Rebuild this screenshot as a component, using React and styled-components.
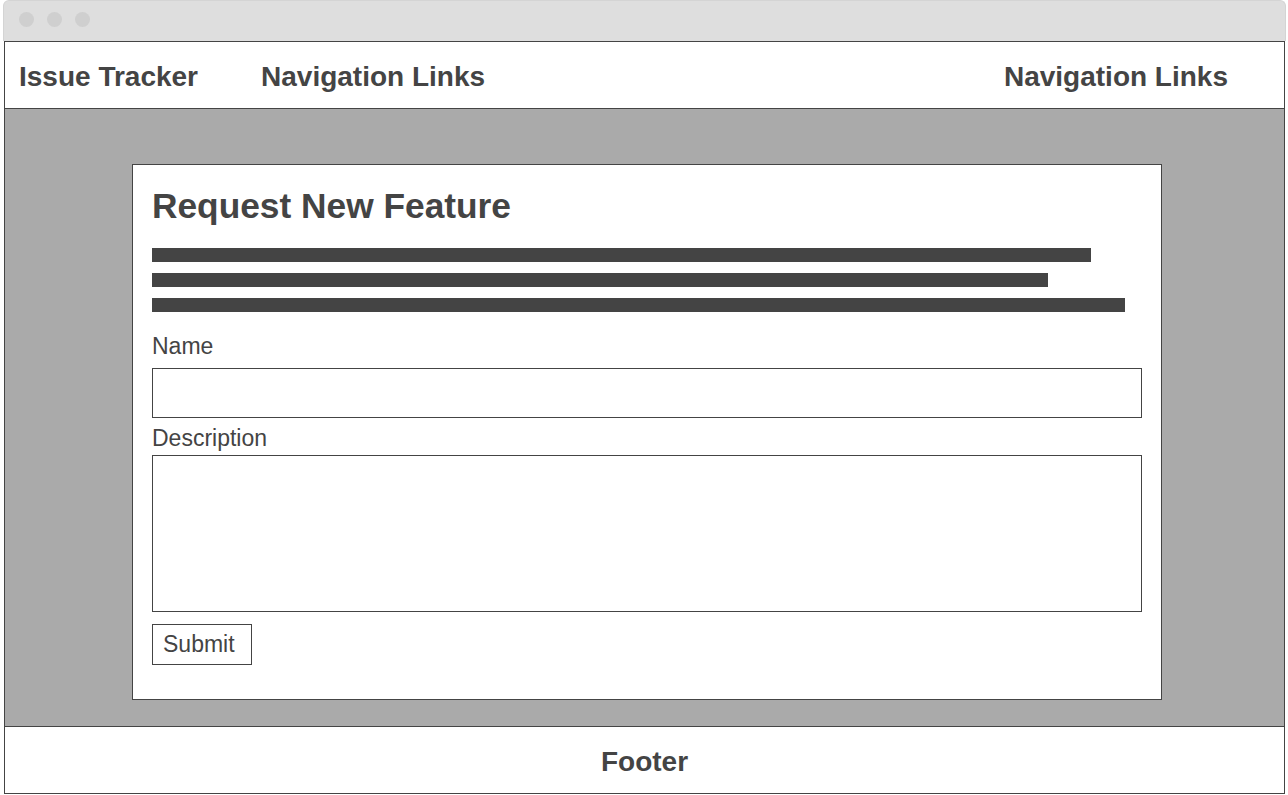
import React from 'react';
import styled, { createGlobalStyle } from 'styled-components';

const Global = createGlobalStyle`
  html, body {
    margin: 0;
    padding: 0;
    background: #ffffff;
    font-family: "Liberation Sans", Arial, sans-serif;
    color: #444444;
  }
  * { box-sizing: border-box; }
`;

const Window = styled.div`
  width: 1283px;
  margin-left: 3px;
`;

const TitleBar = styled.div`
  height: 41px;
  background: #dedede;
  border: 1px solid #d4d4d4;
  border-bottom: none;
  border-radius: 6px 6px 0 0;
  display: flex;
  align-items: flex-start;
  gap: 13px;
  padding: 11px 0 0 15px;
`;

const Dot = styled.span`
  width: 15px;
  height: 15px;
  border-radius: 50%;
  background: #cfcfcf;
`;

const Frame = styled.div`
  margin: 0 1px;
  border: 1px solid #444444;
  display: flex;
  flex-direction: column;
`;

const Header = styled.header`
  height: 67px;
  border-bottom: 1px solid #444444;
  display: flex;
  align-items: flex-start;
  padding: 19px 56px 0 14px;
  background: #ffffff;
`;

const NavText = styled.div`
  font-size: 28px;
  line-height: 32px;
  font-weight: 700;
  margin-left: ${p => p.$push ? 'auto' : p.$gap || '0'};
`;

const Main = styled.main`
  background: #aaaaaa;
  height: 617px;
  padding: 55px 0 26px 127px;
`;

const Card = styled.section`
  width: 1030px;
  height: 536px;
  background: #ffffff;
  border: 1px solid #444444;
  padding: 21px 19px 34px 19px;
  display: flex;
  flex-direction: column;
`;

const Title = styled.h1`
  margin: 0 0 22px 0;
  font-size: 35.3px;
  line-height: 40px;
  font-weight: 700;
`;

const Lines = styled.div`
  display: flex;
  flex-direction: column;
  gap: 11px;
`;

const Line = styled.div`
  height: 14px;
  width: ${p => p.$w}px;
  background: #444444;
`;

const Label = styled.label`
  display: block;
  font-size: 23px;
  line-height: 26px;
  margin: ${p => p.$top}px 0 ${p => p.$bottom}px 0;
`;

const Input = styled.input`
  display: block;
  width: 990px;
  height: 50px;
  border: 1px solid #444444;
  border-radius: 0;
  margin: 0;
  padding: 0 10px;
  font: 22px "Liberation Sans", Arial, sans-serif;
  outline: none;
  background: #ffffff;
`;

const TextArea = styled.textarea`
  display: block;
  width: 990px;
  height: 157px;
  border: 1px solid #444444;
  border-radius: 0;
  margin: 0;
  padding: 8px 10px;
  font: 22px "Liberation Sans", Arial, sans-serif;
  resize: none;
  outline: none;
  background: #ffffff;
`;

const Button = styled.button`
  margin-top: 12px;
  align-self: flex-start;
  width: 100px;
  height: 41px;
  border: 1px solid #444444;
  border-radius: 0;
  background: #ffffff;
  color: #444444;
  font-family: "Liberation Sans", Arial, sans-serif;
  font-size: 23px;
  text-align: left;
  padding: 0 0 0 10px;
  cursor: pointer;
`;

const Footer = styled.footer`
  height: 67px;
  border-top: 1px solid #444444;
  display: flex;
  justify-content: center;
  align-items: flex-start;
  padding-top: 19px;
  background: #ffffff;
`;

export default function App() {
  return (
    <>
      <Global />
      <Window>
        <TitleBar>
          <Dot />
          <Dot />
          <Dot />
        </TitleBar>
        <Frame>
          <Header>
            <NavText>Issue Tracker</NavText>
            <NavText $gap="63px">Navigation Links</NavText>
            <NavText $push>Navigation Links</NavText>
          </Header>
          <Main>
            <Card>
              <Title>Request New Feature</Title>
              <Lines>
                <Line $w={939} />
                <Line $w={896} />
                <Line $w={973} />
              </Lines>
              <Label htmlFor="name" $top={21} $bottom={9}>Name</Label>
              <Input id="name" type="text" />
              <Label htmlFor="desc" $top={7} $bottom={4}>Description</Label>
              <TextArea id="desc" />
              <Button type="button">Submit</Button>
            </Card>
          </Main>
          <Footer>
            <NavText>Footer</NavText>
          </Footer>
        </Frame>
      </Window>
    </>
  );
}
